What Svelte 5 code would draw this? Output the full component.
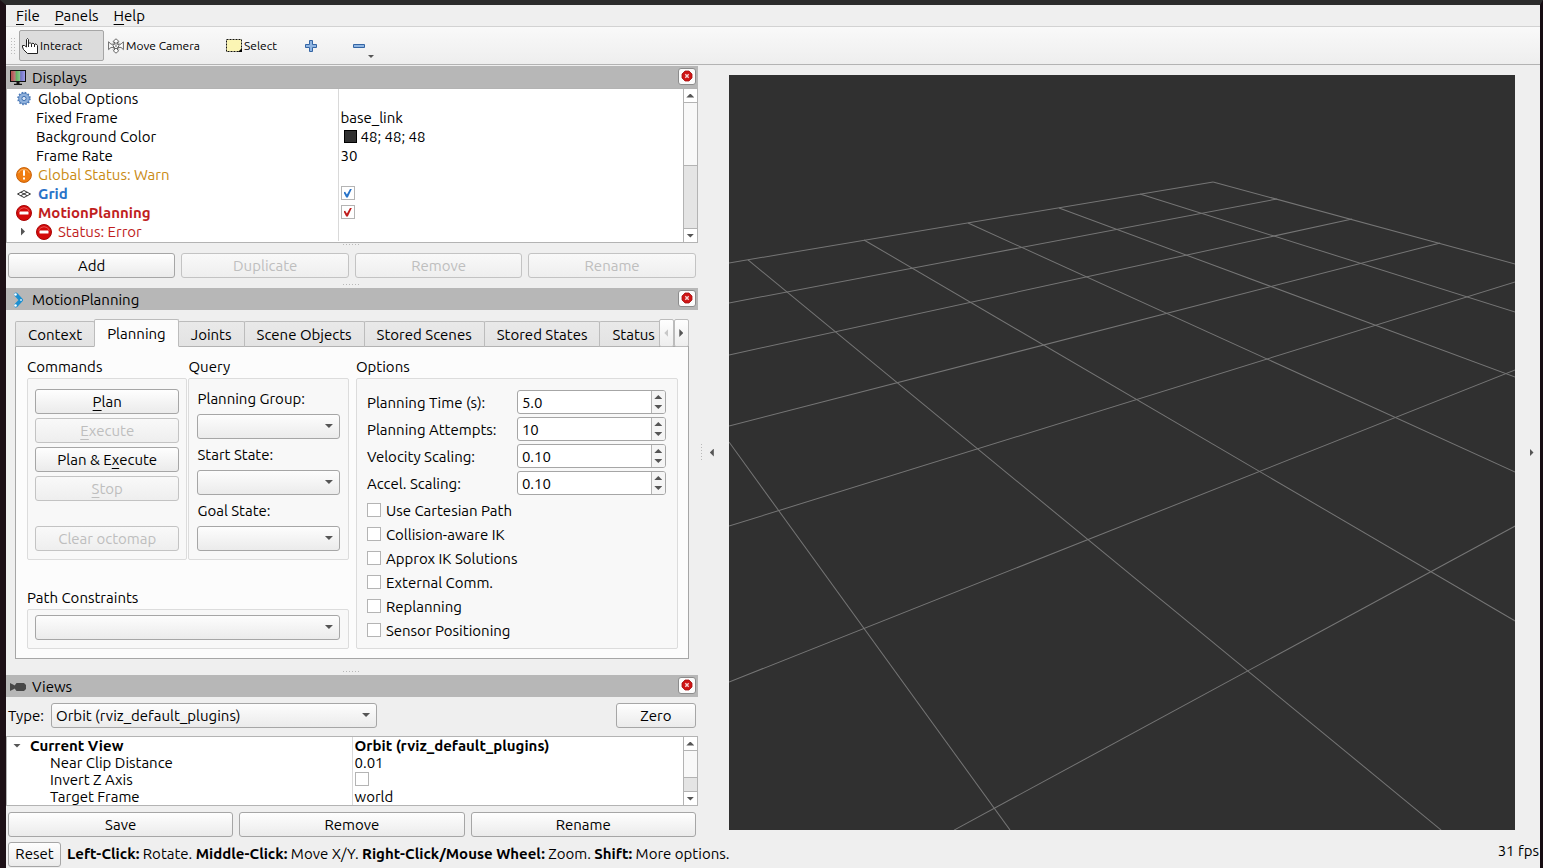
<script lang="ts">
	type Field = { label: string; value: string };

	const menus = ['File', 'Panels', 'Help'];
	const tabs = ['Context', 'Planning', 'Joints', 'Scene Objects', 'Stored Scenes', 'Stored States', 'Status'];
	const queries = ['Planning Group:', 'Start State:', 'Goal State:'];
	const flags = [
		'Use Cartesian Path',
		'Collision-aware IK',
		'Approx IK Solutions',
		'External Comm.',
		'Replanning',
		'Sensor Positioning'
	];

	let activeTab = $state('Planning');
	let gridOn = $state(true);
	let planningOn = $state(true);
	let invertZ = $state(false);

	let fields: Field[] = $state([
		{ label: 'Planning Time (s):', value: '5.0' },
		{ label: 'Planning Attempts:', value: '10' },
		{ label: 'Velocity Scaling:', value: '0.10' },
		{ label: 'Accel. Scaling:', value: '0.10' }
	]);

	function step(field: Field, dir: number) {
		const digits = field.value.split('.')[1]?.length ?? 0;
		field.value = (Number(field.value) + dir * 10 ** -digits).toFixed(digits);
	}

	// ground plane, x1 y1 x2 y2
	const gridLines = [
		[0, 188, 484, 107],
		[0, 228, 548, 124],
		[0, 280, 623, 144],
		[0, 351, 711, 168],
		[0, 451, 786, 207],
		[0, 607, 786, 295],
		[225, 755, 786, 451],
		[484, 107, 786, 189],
		[411, 119, 786, 237],
		[330, 133, 786, 302],
		[239, 148, 786, 397],
		[135, 165, 786, 546],
		[19, 185, 712, 755],
		[0, 367, 281, 755]
	];
</script>

{#snippet errorIcon()}
	<svg class="icon" viewBox="0 0 16 16" aria-hidden="true">
		<circle cx="8" cy="8" r="7.5" fill="#d40b0b" stroke="#a80606" stroke-width="1" />
		<path d="M2.6 6.4a5.8 5.8 0 0 1 10.8 0" fill="none" stroke="#ea5555" />
		<rect x="3.5" y="6.5" width="9" height="3" rx="0.5" fill="#fff" />
	</svg>
{/snippet}

{#snippet closeButton(name: string)}
	<button class="close" aria-label="Close {name}">
		<svg viewBox="0 0 12 12" width="12" height="12">
			<path d="M4 1h4l3 3v4l-3 3H4L1 8V4z" fill="#cf1515" stroke="#a31212" stroke-width=".8" />
			<path d="M4.3 4.3l3.4 3.4M7.7 4.3L4.3 7.7" stroke="#f6d4d4" stroke-width="1.4" />
		</svg>
	</button>
{/snippet}

{#snippet scrollbar(cls: string)}
	<div class="scrollbar {cls}">
		<button aria-label="Scroll up"><i class="tri up"></i></button>
		<div class="thumb"></div>
		<div class="trough"></div>
		<button aria-label="Scroll down"><i class="tri down"></i></button>
	</div>
{/snippet}

<div class="window">
	<nav class="menubar">
		{#each menus as menu}
			<button><u>{menu[0]}</u>{menu.slice(1)}</button>
		{/each}
	</nav>

	<div class="toolbar">
		<span class="handle"></span>
		<button class="tool interact">
			<svg class="icon" viewBox="0 0 16 16" aria-hidden="true">
				<path
					d="M5.5 15.5L1.5 11.5L.5 9V7.5H2.5L4.5 9V1.5L5.5 .5L6.5 1.5V6L8 4.5L9.5 6L11 5L12.5 6.5L14 5.8L15.5 7.5V15.5Z"
					fill="#fff"
					stroke="#222"
				/>
				<path d="M6.5 5v4M9.5 6v3M12.5 6v3" stroke="#222" fill="none" />
			</svg>
			Interact
		</button>
		<button class="tool move">
			<svg class="icon" viewBox="0 0 16 16" fill="#fff" stroke="#444" stroke-width=".8" aria-hidden="true">
				<path d="M8 .8l2.7 2.4-1.2.8v2h-3V4l-1.2-.8zM8 15.2l2.7-2.4-1.2-.8v-2h-3v2l-1.2.8z" />
				<path d="M.6 3.8L3 6.2h3v3.2H3L.6 11.6zM15.4 3.8L13 6.2h-3v3.2h3l2.4 2.2z" />
				<path d="M8 4.6l3.2 3.2L8 11 4.8 7.8z" />
				<path d="M4.8 3.6l6.4 8.2M11.2 3.6l-6.4 8.2" fill="none" stroke="#888" />
			</svg>
			Move Camera
		</button>
		<button class="tool select">
			<svg class="icon" viewBox="0 0 16 16" aria-hidden="true">
				<rect x=".5" y="1.5" width="15" height="12" fill="#fbf5b4" stroke="#111" stroke-dasharray="2 1" />
				<path d="M16 10v4h-4z" fill="#000" />
			</svg>
			Select
		</button>
		<button class="tool add" aria-label="Add tool">
			<svg viewBox="0 0 12 12" width="12" height="12">
				<path d="M4.5.5h3v4h4v3h-4v4h-3v-4h-4v-3h4z" fill="#8fb5e2" stroke="#3465a4" />
			</svg>
		</button>
		<button class="tool remove" aria-label="Remove tool">
			<svg viewBox="0 0 12 12" width="12" height="12">
				<path d="M.5 4.5h11v3H.5z" fill="#8fb5e2" stroke="#3465a4" />
			</svg>
			<i class="tri down"></i>
		</button>
	</div>

	<main>
		<div class="dock">
			<header class="title">
				<svg class="icon" viewBox="0 0 16 16" aria-hidden="true">
					<defs>
						<linearGradient id="screen">
							<stop offset=".1" stop-color="#b55454" />
							<stop offset=".3" stop-color="#b98080" />
							<stop offset=".38" stop-color="#5fae62" />
							<stop offset=".6" stop-color="#86c588" />
							<stop offset=".68" stop-color="#7272c4" />
							<stop offset="1" stop-color="#a0a0ee" />
						</linearGradient>
					</defs>
					<rect x=".5" y=".5" width="15" height="11" fill="url(#screen)" stroke="#111" />
					<path d="M6.5 12h3v1.8H12v1.2H4v-1.2h2.5z" fill="#111" />
				</svg>
				<h2>Displays</h2>
				{@render closeButton('Displays')}
			</header>

			<div class="tree">
				<table class="displays">
					<colgroup><col class="key" /><col /></colgroup>
					<tbody>
						<tr>
							<td>
								<div class="cell">
									<svg class="icon" viewBox="0 0 16 16" aria-hidden="true">
										<circle cx="8" cy="7.5" r="5.4" fill="#8fb1dc" stroke="#3f6fb0" stroke-width=".8" />
										<circle cx="8" cy="7.5" r="6" fill="none" stroke="#4b79b8" stroke-width="1.5" stroke-dasharray="1.6 1.54" />
										<circle cx="8" cy="7.5" r="2.1" fill="#dbe7f6" stroke="#3f6fb0" />
									</svg>
									Global Options
								</div>
							</td>
							<td></td>
						</tr>
						<tr><td><div class="cell leaf">Fixed Frame</div></td><td>base_link</td></tr>
						<tr>
							<td><div class="cell leaf">Background Color</div></td>
							<td><div class="color"><span class="swatch"></span>48; 48; 48</div></td>
						</tr>
						<tr><td><div class="cell leaf">Frame Rate</div></td><td>30</td></tr>
						<tr class="warn">
							<td>
								<div class="cell">
									<svg class="icon" viewBox="0 0 16 16" aria-hidden="true">
										<circle cx="8" cy="8" r="7.4" fill="#f07d10" stroke="#c75f06" />
										<path d="M2.5 6.2a5.8 5.8 0 0 1 11 0" fill="none" stroke="#f9b161" />
										<path d="M7 3.2h2v5.6H7zM7 10.4h2v2H7z" fill="#fff" />
									</svg>
									Global Status: Warn
								</div>
							</td>
							<td></td>
						</tr>
						<tr class="ok">
							<td>
								<div class="cell">
									<svg class="icon" viewBox="0 0 16 16" fill="none" stroke="#333" aria-hidden="true">
										<path d="M1.5 8L8 4.5 14.5 8 8 11.5zM4.8 6.2l6.4 3.5M11.2 6.2L4.8 9.7" />
									</svg>
									Grid
								</div>
							</td>
							<td><input type="checkbox" aria-label="Grid" bind:checked={gridOn} /></td>
						</tr>
						<tr class="error strong">
							<td><div class="cell">{@render errorIcon()}MotionPlanning</div></td>
							<td><input type="checkbox" aria-label="MotionPlanning" bind:checked={planningOn} /></td>
						</tr>
						<tr class="error">
							<td><div class="cell"><span class="twist"><i class="tri right"></i></span>{@render errorIcon()}Status: Error</div></td>
							<td></td>
						</tr>
					</tbody>
				</table>
				{@render scrollbar('half')}
			</div>

			<div class="splitter"></div>
			<div class="buttons">
				<button class="btn">Add</button>
				<button class="btn" disabled>Duplicate</button>
				<button class="btn" disabled>Remove</button>
				<button class="btn" disabled>Rename</button>
			</div>
			<div class="splitter low"></div>

			<header class="title">
				<svg class="icon" viewBox="0 0 16 16" aria-hidden="true">
					<path d="M6 2.5L11 8L6 13.5" fill="none" stroke="#1c8fd0" stroke-width="4" stroke-linejoin="round" stroke-linecap="round" />
					<circle cx="5.5" cy="2.5" r="1.3" fill="#fff" />
					<circle cx="11" cy="8" r="1.1" fill="#bfe2f5" />
					<circle cx="5.5" cy="13.5" r="1.3" fill="#fff" />
				</svg>
				<h2>MotionPlanning</h2>
				{@render closeButton('MotionPlanning')}
			</header>

			<section class="planning">
				<div class="tabbar">
					<div class="tabs" role="tablist">
						{#each tabs as tab}
							<button
								role="tab"
								class="tab"
								class:active={tab === activeTab}
								aria-selected={tab === activeTab}
								onclick={() => (activeTab = tab)}>{tab}</button
							>
						{/each}
					</div>
					<button class="tab-scroll" aria-label="Scroll tabs left" disabled><i class="tri left"></i></button>
					<button class="tab-scroll" aria-label="Scroll tabs right"><i class="tri right"></i></button>
				</div>

				<div class="pane" role="tabpanel">
					<div class="left">
						<div class="pair">
							<div class="group">
								<h3>Commands</h3>
								<div class="box commands">
									<button class="btn"><span><u>P</u>lan</span></button>
									<button class="btn" disabled><span><u>E</u>xecute</span></button>
									<button class="btn"><span>Plan &amp; E<u>x</u>ecute</span></button>
									<button class="btn" disabled><span><u>S</u>top</span></button>
									<button class="btn last" disabled>Clear octomap</button>
								</div>
							</div>
							<div class="group">
								<h3>Query</h3>
								<div class="box query">
									{#each queries as query, i}
										<label for="query-{i}">{query}</label>
										<span class="combo"><select id="query-{i}"></select></span>
									{/each}
								</div>
							</div>
						</div>
						<div class="group">
							<h3 id="constraints">Path Constraints</h3>
							<div class="box path">
								<span class="combo"><select aria-labelledby="constraints"></select></span>
							</div>
						</div>
					</div>

					<div class="group options">
						<h3>Options</h3>
						<div class="box">
							{#each fields as field, i}
								<div class="field">
									<label for="field-{i}">{field.label}</label>
									<span class="spin">
										<input id="field-{i}" type="text" bind:value={field.value} />
										<span class="steps">
											<button aria-label="Increase" onclick={() => step(field, 1)}><i class="tri up"></i></button>
											<button aria-label="Decrease" onclick={() => step(field, -1)}><i class="tri down"></i></button>
										</span>
									</span>
								</div>
							{/each}
							{#each flags as flag}
								<label class="flag"><input type="checkbox" /><span>{flag}</span></label>
							{/each}
						</div>
					</div>
				</div>
			</section>
			<div class="splitter tall"></div>

			<header class="title">
				<svg class="icon" viewBox="0 0 16 16" aria-hidden="true">
					<path d="M0 4l5 2.6V6l1.5-2h7.5l2 2v4l-2 2H6.5L5 10v-.6L0 12z" fill="#484848" />
				</svg>
				<h2>Views</h2>
				{@render closeButton('Views')}
			</header>

			<div class="view-type">
				<label for="view-type">Type:</label>
				<span class="combo">
					<select id="view-type"><option>Orbit (rviz_default_plugins)</option></select>
				</span>
				<button class="btn zero">Zero</button>
			</div>

			<div class="tree">
				<table class="views">
					<colgroup><col class="key" /><col /></colgroup>
					<tbody>
						<tr class="strong">
							<td><div class="cell root"><span class="twist"><i class="tri down"></i></span>Current View</div></td>
							<td>Orbit (rviz_default_plugins)</td>
						</tr>
						<tr><td><div class="cell leaf">Near Clip Distance</div></td><td>0.01</td></tr>
						<tr>
							<td><div class="cell leaf">Invert Z Axis</div></td>
							<td><input type="checkbox" aria-label="Invert Z Axis" bind:checked={invertZ} /></td>
						</tr>
						<tr><td><div class="cell leaf">Target Frame</div></td><td>world</td></tr>
					</tbody>
				</table>
				{@render scrollbar('most')}
			</div>
			<div class="buttons views-buttons">
				<button class="btn">Save</button>
				<button class="btn">Remove</button>
				<button class="btn">Rename</button>
			</div>
		</div>

		<div class="gutter">
			<span class="grip"></span>
			<button aria-label="Hide left dock"><i class="tri left"></i></button>
		</div>
		<div class="viewport">
			<svg viewBox="0 0 786 755" preserveAspectRatio="xMidYMid slice" role="img" aria-label="3D view">
				{#each gridLines as [x1, y1, x2, y2]}
					<line {x1} {y1} {x2} {y2} />
				{/each}
			</svg>
		</div>
		<div class="gutter end">
			<button aria-label="Hide right dock"><i class="tri right"></i></button>
		</div>
	</main>

	<footer>
		<button class="btn reset">Reset</button>
		<p>
			<b>Left-Click:</b> Rotate. <b>Middle-Click:</b> Move X/Y. <b>Right-Click/Mouse Wheel:</b> Zoom. <b>Shift:</b> More
			options.
		</p>
		<span class="fps">31 fps</span>
	</footer>
</div>

<style>
	:global(body) {
		background: #1d1016;
	}

	.window {
		--line: #b3b3b3;
		--edge: #a6a6a6;
		display: flex;
		flex-direction: column;
		box-sizing: border-box;
		min-height: 100vh;
		border-style: solid;
		border-color: #2c2c2c #160c12 #1d1016 #1d1016;
		border-width: 5px 3px 0 6px;
		background: #efefef;
		color: #000;
		font: 15px/18px Ubuntu, 'Open Sans', sans-serif;
	}

	button,
	input,
	select {
		box-sizing: border-box;
		margin: 0;
		font: inherit;
		color: inherit;
	}

	button {
		padding: 0;
		border: 0;
		background: none;
		white-space: nowrap;
	}

	h2,
	h3,
	p {
		margin: 0;
		font-size: 15px;
		font-weight: 400;
	}

	u {
		text-underline-offset: 3px;
	}

	.icon {
		flex: none;
		width: 16px;
		height: 16px;
	}

	.tri {
		display: block;
		width: 8px;
		height: 4px;
		background: #555;
		clip-path: polygon(0 0, 100% 0, 50% 100%);
	}

	.tri.up {
		clip-path: polygon(50% 0, 100% 100%, 0 100%);
	}

	.tri.left,
	.tri.right {
		width: 4px;
		height: 8px;
		clip-path: polygon(0 0, 100% 50%, 0 100%);
	}

	.tri.left {
		clip-path: polygon(100% 0, 100% 100%, 0 50%);
	}

	.menubar {
		display: flex;
		gap: 15px;
		height: 21px;
		padding-left: 10px;
		border-bottom: 1px solid #d2d2d2;
	}

	.toolbar {
		display: flex;
		align-items: center;
		height: 37px;
		border-bottom: 1px solid var(--line);
		background: linear-gradient(#f9f9f9, #eee);
		font-size: 12px;
	}

	.handle {
		width: 5px;
		height: 17px;
		margin: 0 4px;
		background: radial-gradient(circle, #bbb 1px, transparent 1px) 0 0 / 3px 3px;
	}

	.tool {
		display: flex;
		align-items: center;
		gap: 2px;
		height: 31px;
		padding: 0 4px;
	}

	.interact {
		width: 85px;
		padding: 0 2px;
		border: 1px solid var(--edge);
		border-radius: 2px;
		background: #dcdcdc;
	}

	.move {
		width: 118px;
	}

	.select {
		width: 73px;
	}

	.add,
	.remove {
		position: relative;
		justify-content: center;
		width: 32px;
	}

	.remove {
		margin-left: 16px;
	}

	.remove .tri {
		position: absolute;
		right: 1px;
		bottom: 3px;
		width: 6px;
		height: 3px;
	}

	main {
		display: grid;
		grid-template-columns: 45.1% 31px 1fr 25px;
		flex: 1;
		padding-top: 1px;
	}

	.dock {
		min-width: 0;
	}

	.title {
		display: flex;
		align-items: center;
		gap: 6px;
		box-sizing: border-box;
		height: 22px;
		padding: 2px 2px 0 4px;
		background: #b7b7b7;
	}

	.close {
		display: grid;
		place-items: center;
		width: 18px;
		height: 17px;
		margin: 0 0 4px auto;
		border: 1px solid #8c8c8c;
		border-radius: 3px;
		background: #fcfcfc;
	}

	.tree {
		display: flex;
		border: 1px solid var(--line);
		background: #fff;
	}

	table {
		flex: 1;
		min-width: 0;
		table-layout: fixed;
		border-collapse: collapse;
	}

	td {
		height: 19px;
		padding: 0 0 0 2px;
		line-height: 17px;
		white-space: nowrap;
	}

	td:first-child {
		padding: 0;
		border-right: 1px solid #d9d9d9;
	}

	td input {
		display: block;
		margin-bottom: 2px;
	}

	.displays {
		margin-bottom: 1px;
	}

	.displays .key {
		width: 331px;
	}

	.views .key {
		width: 345px;
	}

	.views td {
		height: 17px;
	}

	.cell {
		display: flex;
		align-items: center;
		gap: 6px;
		padding-left: 9px;
	}

	.leaf {
		padding-left: 29px;
	}

	.views .leaf {
		padding-left: 43px;
	}

	.twist {
		display: flex;
		width: 14px;
		padding-left: 5px;
		box-sizing: border-box;
	}

	.root {
		gap: 3px;
		padding-left: 6px;
	}

	.root .twist {
		padding-left: 0;
	}

	.strong,
	.ok {
		font-weight: 700;
	}

	.warn {
		color: #c98a12;
	}

	.ok {
		color: #2873c8;
	}

	.error {
		color: #c01e1e;
	}

	.color {
		display: flex;
		align-items: center;
		gap: 4px;
		padding-left: 3px;
	}

	.swatch {
		width: 11px;
		height: 11px;
		border: 1px solid #000;
		background: #303030;
	}

	input[type='checkbox'] {
		flex: none;
		appearance: none;
		width: 14px;
		height: 14px;
		border: 1px solid #b4b4b4;
		background: #fff;
	}

	input[type='checkbox']:checked::after {
		content: '';
		display: block;
		width: 9px;
		height: 9px;
		margin: 2px;
		background: currentColor;
		clip-path: polygon(0 42%, 18% 36%, 38% 68%, 72% 5%, 95% 0, 48% 100%, 30% 100%);
	}

	.scrollbar {
		display: flex;
		flex-direction: column;
		width: 13px;
		border-left: 1px solid var(--line);
	}

	.scrollbar button {
		display: grid;
		place-items: center;
		height: 13px;
	}

	.thumb,
	.trough {
		flex: 1;
		border: solid var(--line);
		border-width: 1px 0 0;
		background: #f8f8f8;
	}

	.trough {
		border-width: 1px 0;
		background: #e4e4e4;
	}

	.most .thumb {
		flex-grow: 2;
	}

	.splitter {
		height: 10px;
		background: repeating-linear-gradient(to right, #b9b9b9 0 1px, transparent 1px 3px) center 1px / 17px 1px no-repeat;
	}

	.splitter.low {
		background-position-y: 6px;
	}

	.splitter.tall {
		height: 16px;
		background-position-y: 12px;
	}

	.buttons {
		display: flex;
		gap: 6px;
		padding: 0 2px;
	}

	.buttons .btn {
		flex: 1;
	}

	.views-buttons {
		padding-top: 6px;
	}

	.btn {
		height: 25px;
		border: 1px solid var(--edge);
		border-radius: 3px;
		background: linear-gradient(#fefefe, #ebebeb);
	}

	.btn:disabled {
		border-color: #c3c3c3;
		background: linear-gradient(#f9f9f9, #eee);
		color: #bebebe;
	}

	.planning {
		padding: 9px 9px 0;
	}

	.tabbar {
		display: flex;
		height: 28px;
		margin-bottom: -1px;
	}

	.tabs {
		display: flex;
		flex: 1;
		align-items: flex-end;
		min-width: 0;
		overflow: hidden;
	}

	.tab {
		position: relative;
		flex: none;
		height: 26px;
		margin-right: -1px;
		padding: 2px 12px 0;
		border: 1px solid #bcbcbc;
		border-bottom-color: var(--line);
		border-radius: 2px 2px 0 0;
		background: linear-gradient(#e9e9e9, #e3e3e3);
	}

	.tab.active {
		z-index: 1;
		height: 28px;
		border-bottom-color: #fcfcfc;
		background: #fcfcfc;
	}

	.tab-scroll {
		display: grid;
		place-items: center;
		width: 15px;
		border: 1px solid #bcbcbc;
		border-radius: 2px;
		background: linear-gradient(#fefefe, #eee);
	}

	.tab-scroll:disabled .tri {
		background: #c8c8c8;
	}

	.pane {
		display: grid;
		grid-template-columns: 1fr 1fr;
		gap: 7px;
		padding: 9px 10px 9px 11px;
		border: 1px solid var(--edge);
		background: #fcfcfc;
	}

	.left {
		display: flex;
		flex-direction: column;
		justify-content: space-between;
	}

	.pair {
		display: grid;
		grid-template-columns: 1fr 1fr;
		gap: 1px;
	}

	.group {
		display: flex;
		flex-direction: column;
	}

	h3,
	.query label {
		line-height: 22px;
	}

	.box {
		flex: 1;
		border: 1px solid #dcdcdc;
		border-radius: 2px;
		background: #f8f8f8;
	}

	.commands {
		display: flex;
		flex-direction: column;
		gap: 4px;
		padding: 10px 7px 8px;
	}

	.commands .last {
		margin-top: 21px;
	}

	.query {
		display: flex;
		flex-direction: column;
		padding: 9px 8px 3px;
	}

	.query .combo {
		margin: 4px 0 5px;
	}

	.path {
		padding: 5px 8px 8px 7px;
	}

	.combo {
		position: relative;
		display: block;
	}

	.combo::after {
		content: '';
		position: absolute;
		top: 10px;
		right: 7px;
		width: 8px;
		height: 4px;
		background: #555;
		clip-path: polygon(0 0, 100% 0, 50% 100%);
		pointer-events: none;
	}

	select {
		display: block;
		appearance: none;
		width: 100%;
		height: 25px;
		padding: 0 20px 0 4px;
		border: 1px solid var(--edge);
		border-radius: 3px;
		background: linear-gradient(#fdfdfd, #ebebeb);
	}

	.options .box {
		padding: 11px 11px 6px 10px;
	}

	.field {
		display: grid;
		grid-template-columns: 150px 1fr;
		align-items: center;
		margin-bottom: 3px;
	}

	.field label,
	.flag span {
		padding-top: 2px;
	}

	.spin {
		display: flex;
		box-sizing: border-box;
		height: 24px;
		border: 1px solid var(--edge);
		border-radius: 3px;
		background: #fff;
		overflow: hidden;
	}

	.spin input {
		flex: 1;
		min-width: 0;
		padding: 2px 4px 0;
		border: 0;
		background: none;
	}

	.steps {
		display: grid;
		width: 13px;
		padding: 1px 0;
		border-left: 1px solid var(--line);
		background: #f5f5f5;
	}

	.steps button {
		display: grid;
		place-items: center;
	}

	.flag {
		display: flex;
		align-items: center;
		gap: 5px;
		height: 24px;
	}

	.view-type {
		display: flex;
		align-items: center;
		gap: 7px;
		padding: 6px 2px 8px;
	}

	.view-type .combo {
		width: 326px;
	}

	.zero {
		width: 80px;
		margin-left: auto;
	}

	.gutter {
		display: flex;
		align-items: center;
		gap: 8px;
		padding: 9px 0 8px 3px;
	}

	.gutter.end {
		justify-content: center;
		padding-left: 8px;
	}

	.grip {
		width: 1px;
		height: 17px;
		background: repeating-linear-gradient(#b9b9b9 0 1px, transparent 1px 3px);
	}

	.viewport {
		position: relative;
		margin: 9px 0 8px;
		background: #303030;
		overflow: hidden;
	}

	.viewport svg {
		position: absolute;
		width: 100%;
		height: 100%;
	}

	.viewport line {
		stroke: #757575;
	}

	footer {
		display: flex;
		align-items: center;
		gap: 6px;
		box-sizing: border-box;
		height: 30px;
		padding: 2px 1px 0 2px;
	}

	.reset {
		width: 53px;
	}

	.fps {
		align-self: flex-start;
		margin: 2px 0 0 auto;
	}
</style>
